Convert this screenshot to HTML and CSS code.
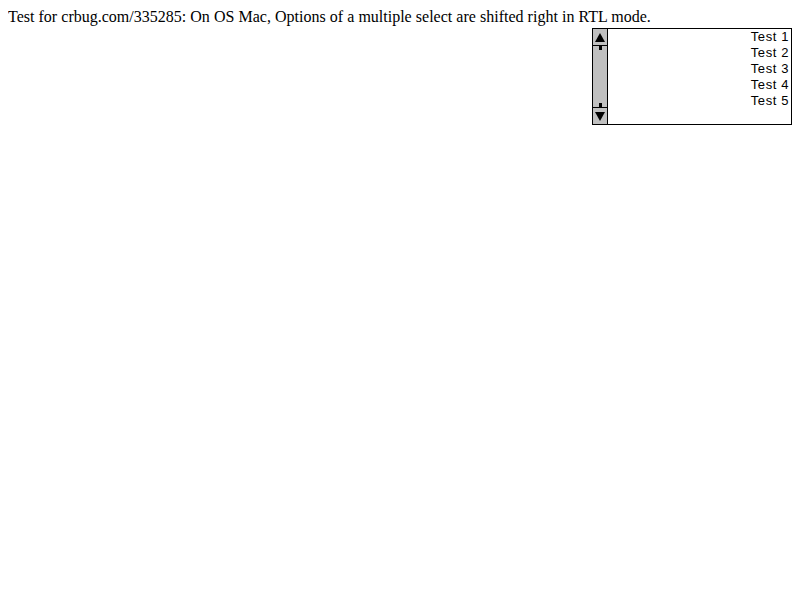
FILE: index.html
```html
<!DOCTYPE html>
<html>
<head>
<meta charset="utf-8">
<link rel="stylesheet" href="styles.css">
</head>
<body>
<div class="line">Test for crbug.com/335285: On OS Mac, Options of a multiple select are shifted right in RTL mode.</div>
<div class="rtl" dir="rtl">
  <div class="select" dir="ltr">
    <div class="scrollbar">
      <div class="btn up"><span class="tri-up"></span></div>
      <div class="track">
        <span class="tick"></span>
        <span class="tick"></span>
      </div>
      <div class="btn down"><span class="tri-down"></span></div>
    </div>
    <div class="list">
      <div class="opt">Test 1</div>
      <div class="opt">Test 2</div>
      <div class="opt">Test 3</div>
      <div class="opt">Test 4</div>
      <div class="opt">Test 5</div>
    </div>
  </div>
</div>
</body>
</html>
```
FILE: styles.css
```css
html, body {
  margin: 0;
  padding: 0;
  background: #fff;
}
body {
  margin: 8px;
  font-family: "Liberation Serif", "Times New Roman", serif;
  font-size: 16px;
  color: #000;
}
.line {
  line-height: 18px;
  height: 18px;
  word-spacing: 0.1px;
}
.rtl {
  display: flex;
  justify-content: flex-start;
  margin-top: 2px;
}
.select {
  width: 200px;
  height: 97px;
  box-sizing: border-box;
  border: 1px solid #000;
  display: flex;
  background: #fff;
}
.scrollbar {
  width: 15px;
  box-sizing: border-box;
  border-right: 1px solid #000;
  background: #c0c0c0;
  display: flex;
  flex-direction: column;
}
.btn {
  height: 17px;
  box-sizing: border-box;
  display: flex;
  align-items: center;
  justify-content: center;
  background: #c0c0c0;
}
.btn.up {
  border-bottom: 1px solid #000;
}
.btn.down {
  border-top: 1px solid #000;
}
.tri-up {
  width: 0;
  height: 0;
  border-left: 5px solid transparent;
  border-right: 5px solid transparent;
  border-bottom: 9px solid #000;
}
.tri-down {
  width: 0;
  height: 0;
  border-left: 5px solid transparent;
  border-right: 5px solid transparent;
  border-top: 9px solid #000;
}
.track {
  flex: 1;
  display: flex;
  flex-direction: column;
  justify-content: space-between;
  align-items: center;
}
.tick {
  width: 3px;
  height: 4px;
  background: #000;
}
.list {
  flex: 1;
  padding-right: 2px;
  font-family: "Liberation Sans", Arial, sans-serif;
  font-size: 13px;
  letter-spacing: 0.6px;
  text-align: right;
}
.opt {
  height: 16px;
  line-height: 16px;
}
```
